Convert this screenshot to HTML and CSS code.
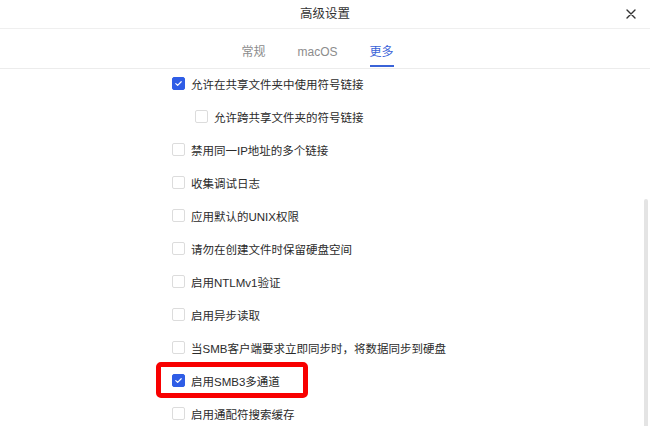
FILE: index.html
```html
<!DOCTYPE html>
<html lang="zh-CN">
<head>
<meta charset="utf-8">
<title>高级设置</title>
<link rel="stylesheet" href="styles.css">
</head>
<body>
<div class="dialog">
  <header class="header">
    <span></span>
    <h1 class="title">高级设置</h1>
    <button class="close" aria-label="关闭">
      <svg width="10" height="10" viewBox="0 0 10 10"><path d="M1 1L9 9M9 1L1 9" stroke="#333" stroke-width="1.4" stroke-linecap="round"/></svg>
    </button>
  </header>
  <nav class="tabs">
    <div class="tab">常规</div>
    <div class="tab">macOS</div>
    <div class="tab active">更多</div>
  </nav>
  <ul class="list">
    <li class="row"><span class="cb checked"><svg viewBox="0 0 13 13"><path d="M3.3 6.7L5.5 8.8L9.7 4.4" fill="none" stroke="#fff" stroke-width="1.4" stroke-linecap="round" stroke-linejoin="round"/></svg></span><span>允许在共享文件夹中使用符号链接</span></li>
    <li class="row sub"><span class="cb"></span><span>允许跨共享文件夹的符号链接</span></li>
    <li class="row"><span class="cb"></span><span>禁用同一IP地址的多个链接</span></li>
    <li class="row"><span class="cb"></span><span>收集调试日志</span></li>
    <li class="row"><span class="cb"></span><span>应用默认的UNIX权限</span></li>
    <li class="row"><span class="cb"></span><span>请勿在创建文件时保留硬盘空间</span></li>
    <li class="row"><span class="cb"></span><span>启用NTLMv1验证</span></li>
    <li class="row"><span class="cb"></span><span>启用异步读取</span></li>
    <li class="row"><span class="cb"></span><span>当SMB客户端要求立即同步时，将数据同步到硬盘</span></li>
    <li class="row"><span class="cb checked"><svg viewBox="0 0 13 13"><path d="M3.3 6.7L5.5 8.8L9.7 4.4" fill="none" stroke="#fff" stroke-width="1.4" stroke-linecap="round" stroke-linejoin="round"/></svg></span><span>启用SMB3多通道</span></li>
    <li class="row"><span class="cb"></span><span>启用通配符搜索缓存</span></li>
  </ul>
  <div class="scrollbar"></div>
  <div class="highlight"></div>
</div>
</body>
</html>
```

FILE: styles.css
```css
* { box-sizing: border-box; }
html, body { margin: 0; padding: 0; background: #fff; }
body {
  font-family: "Liberation Sans", "Noto Sans CJK SC", sans-serif;
  color: #333;
}
.dialog {
  position: relative;
  width: 650px;
  height: 426px;
  overflow: hidden;
  background: #fff;
}
.header {
  height: 29px;
  display: grid;
  grid-template-columns: 1fr auto 1fr;
  align-items: center;
  border-bottom: 1px solid #efefef;
}
.title {
  margin: 0;
  font-size: 12.5px;
  font-weight: normal;
  color: #333;
  line-height: 18px;
}
.close {
  justify-self: end;
  margin-right: 14px;
  width: 10px;
  height: 10px;
  padding: 0;
  border: 0;
  background: none;
  display: flex;
}
.tabs {
  height: 40px;
  display: flex;
  justify-content: center;
  gap: 32px;
  padding-right: 15px;
  border-bottom: 1px solid #ececec;
}
.tab {
  display: flex;
  flex-direction: column;
  align-items: center;
  padding-top: 15px;
  font-size: 12px;
  line-height: 17px;
  color: #8c8c8c;
}
.tab.active { color: #3a63d8; }
.tab.active::after {
  content: "";
  display: block;
  width: 100%;
  height: 2px;
  margin-top: 4px;
  background: #3a63d8;
}
.list {
  list-style: none;
  margin: -2px 0 0;
  padding: 0 0 0 172px;
}
.row {
  height: 33px;
  display: flex;
  align-items: center;
  gap: 6px;
  font-size: 11.5px;
  color: #2b2b2b;
}
.row.sub { padding-left: 23px; }
.cb {
  width: 13px;
  height: 13px;
  flex: none;
  border: 1px solid #dcdcdc;
  border-radius: 2px;
  background: #fff;
  display: flex;
}
.cb.checked {
  background: #2f5de6;
  border-color: #2f5de6;
}
.cb svg { width: 11px; height: 11px; }
.scrollbar {
  position: absolute;
  right: 2px;
  top: 199px;
  width: 4px;
  height: 240px;
  border-radius: 2px;
  background: #e4e4e4;
}
.highlight {
  position: absolute;
  left: 156px;
  top: 362px;
  width: 152px;
  height: 36px;
  border: 5px solid #f80000;
  border-radius: 5px;
}
```
